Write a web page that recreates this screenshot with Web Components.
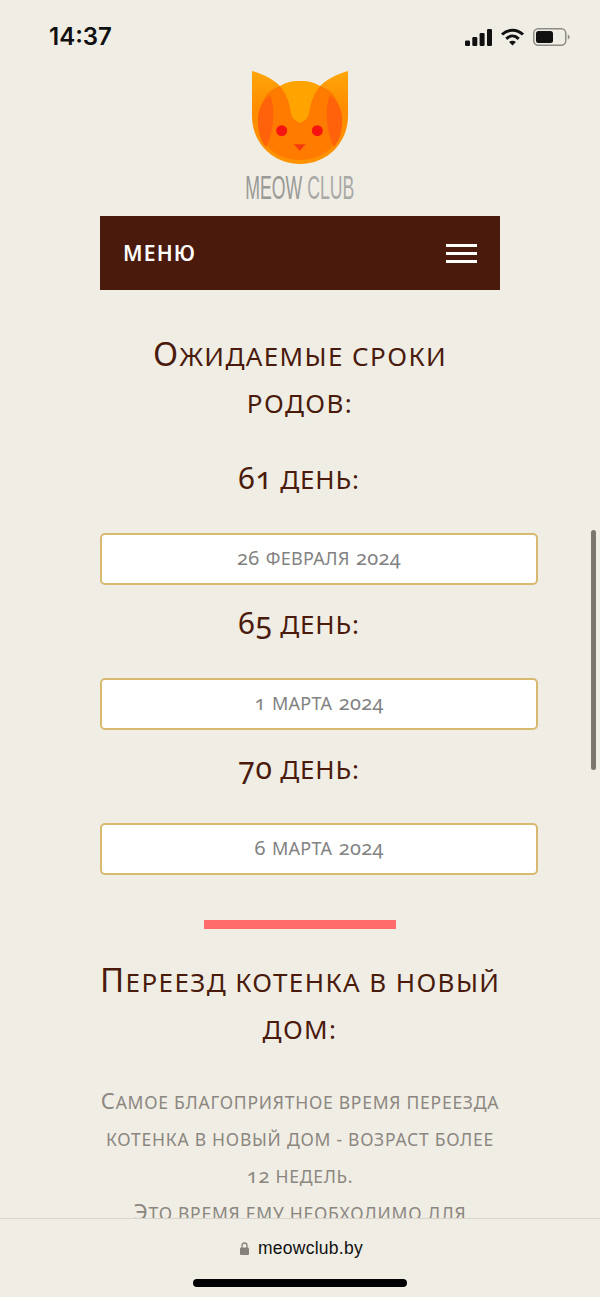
<!DOCTYPE html>
<html lang="ru">
<head>
<meta charset="utf-8">
<title>Meow Club</title>
<style>
    html, body { margin: 0; height: 1297px; overflow: hidden; background: #f0ede5; }
    body { font-family: "Noto Sans", "Open Sans", sans-serif; position: relative; }
</style>
</head>
<body>
<meow-page>
    <status-bar slot="status"></status-bar>
    <site-logo></site-logo>
    <site-menu></site-menu>
    <section-title><b>О</b>жидаемые сроки<br>родов:</section-title>
    <day-title><b>61</b> день:</day-title>
    <date-field><b>26</b> февраля <b>2024</b></date-field>
    <day-title><b>65</b> день:</day-title>
    <date-field><b>1</b> марта <b>2024</b></date-field>
    <day-title><b>70</b> день:</day-title>
    <date-field><b>6</b> марта <b>2024</b></date-field>
    <pink-rule></pink-rule>
    <section-title><b>П</b>ереезд котенка в новый<br>дом:</section-title>
    <body-text><b>С</b>амое благоприятное время переезда<br>котенка в новый дом - возраст более<br><i>12</i> недель.<br><b>Э</b>то время ему необходимо для</body-text>
</meow-page>
<page-scrollbar></page-scrollbar>
<browser-bar>meowclub.by</browser-bar>

<script>
function define(name, html){
    customElements.define(name, class extends HTMLElement {
        constructor(){
            super();
            this.attachShadow({mode:"open"}).innerHTML = html;
        }
    });
}

define("meow-page", `
    <style>
        :host { display: block; }
        #content { width: 400px; margin-left: 100px; }
    </style>
    <slot name="status"></slot>
    <div id="content"><slot></slot></div>
`);

define("status-bar", `
    <style>
        :host { display: flex; justify-content: space-between; align-items: flex-start; height: 71px; padding: 25px 30px 0 49px; box-sizing: border-box; }
        #time { font: 600 24px/24px Inter, sans-serif; color: #111; }
        #icons { display: flex; align-items: center; gap: 8px; margin-top: 3px; }
        svg { display: block; }
    </style>
    <span id="time">14:37</span>
    <div id="icons">
        <svg width="27" height="17" viewBox="0 0 27 17" fill="#111">
            <rect x="0" y="11.5" width="5" height="5.5" rx="1.2"/>
            <rect x="7.3" y="8" width="5" height="9" rx="1.2"/>
            <rect x="14.6" y="4" width="5" height="13" rx="1.2"/>
            <rect x="22" y="0" width="5" height="17" rx="1.2"/>
        </svg>
        <svg width="25" height="18" viewBox="0 0 24 18" fill="none" stroke="#111" stroke-width="3">
            <path d="M1.5 6.5 C7.5 .8 16.5 .8 22.5 6.5"/>
            <path d="M5.8 10.8 C9.5 7.2 14.5 7.2 18.2 10.8"/>
            <path d="M12 17.6 L8.6 14 C10.5 12.4 13.5 12.4 15.4 14 Z" fill="#111" stroke="none"/>
        </svg>
        <svg width="37" height="18" viewBox="0 0 37 18">
            <rect x=".75" y=".75" width="32" height="16.5" rx="4.5" fill="none" stroke="#8d8b86" stroke-width="1.5"/>
            <rect x="3" y="3" width="17" height="12" rx="2.5" fill="#111"/>
            <path d="M34.8 6.5 C36 7 36.6 8 36.6 9 C36.6 10 36 11 34.8 11.5 Z" fill="#8d8b86"/>
        </svg>
    </div>
`);

define("site-logo", `
    <style>
        :host { display: flex; flex-direction: column; align-items: center; height: 145px; }
        svg { display: block; }
        #name { display: flex; justify-content: center; width: 110px; height: 36px; margin-top: 5px; font: 34px/36px "Liberation Sans", sans-serif; color: #999996; white-space: nowrap; }
        #name span { display: inline-block; transform: scaleX(.52); transform-origin: center; }
        #name em { font-style: normal; color: #a9a9a6; }
    </style>
    <svg width="96" height="93" viewBox="0 0 96 93">
        <defs>
            <linearGradient id="ear" x1="0" y1="0" x2="0" y2="1">
                <stop offset="0" stop-color="#ffa60a"/>
                <stop offset=".4" stop-color="#ff8c00"/>
                <stop offset="1" stop-color="#ff9300"/>
            </linearGradient>
        </defs>
        <path d="M0 0 C11 3 21 8 29 16 C34 12 41 10 48 10 C55 10 62 12 67 16 C75 8 85 3 96 0 L96 45 C96 72 75 93 48 93 C21 93 0 72 0 45 Z" fill="url(#ear)"/>
        <path d="M28 15 C34 11 41 10 48 10 C55 10 62 11 68 15 L62 36 L56 50 L48 52 L40 50 L34 36 Z" fill="#ffa300"/>
        <path d="M28 15 C33 21 36 28 38 36 C39 44 40 49 48 52 C56 49 57 44 58 36 C60 28 63 21 68 15 C76 18 82 22 85 30 C89 40 90 50 88 60 C84 78 68 89 48 89 C28 89 12 78 8 60 C6 50 7 40 11 30 C14 22 20 18 28 15 Z" fill="#ff7b00"/>
        <path d="M18 24 C23 36 23 58 14 76 C8 69 5 58 6 46 C7 37 11 29 18 24 Z" fill="#ff620a"/>
        <path d="M78 24 C73 36 73 58 82 76 C88 69 91 58 90 46 C89 37 85 29 78 24 Z" fill="#ff620a"/>
        <circle cx="29.7" cy="59.7" r="5.5" fill="#f5140f"/>
        <circle cx="65.3" cy="59.7" r="5.5" fill="#f5140f"/>
        <path d="M41.7 73.3 H53.7 L47.7 79.7 Z" fill="#f53c0c"/>
    </svg>
    <div id="name"><span>MEOW <em>CLUB</em></span></div>
`);

define("site-menu", `
    <style>
        :host { display: flex; justify-content: space-between; align-items: center; height: 74px; padding: 0 23px; box-sizing: border-box; background: #4a1b0c; color: #fff; }
        span { font: 600 21px/1 "Noto Sans", sans-serif; text-transform: uppercase; letter-spacing: 1.2px; }
        #burger { display: flex; flex-direction: column; gap: 5px; width: 31px; }
        #burger i { display: block; height: 3px; background: #fff; }
    </style>
    <span>меню</span>
    <div id="burger"><i></i><i></i><i></i></div>
`);

define("section-title", `
    <style>
        :host { display: block; text-align: center; white-space: nowrap; margin: 43px 0 -1px; font: 400 26px/47px "Noto Sans", sans-serif; text-transform: uppercase; letter-spacing: 1.4px; font-feature-settings: "onum"; color: #4a1b0c; }
        ::slotted(b) { font-weight: 400; font-size: 33px; line-height: 0; }
    </style>
    <slot></slot>
`);

define("day-title", `
    <style>
        :host { display: block; width: 398px; text-align: center; margin: 30px 0 29.5px; font: 400 26px/47px "Noto Sans", sans-serif; text-transform: uppercase; letter-spacing: .8px; font-feature-settings: "onum"; color: #4a1b0c; }
        ::slotted(b) { font-weight: 400; font-size: 30px; line-height: 0; }
    </style>
    <slot></slot>
`);

define("date-field", `
    <style>
        :host { display: flex; justify-content: center; align-items: center; gap: .35em; width: 438px; height: 52px; margin-bottom: -13.5px; padding-bottom: 2px; box-sizing: border-box; background: #fff; border: 2px solid #d8b970; border-radius: 5px; font: 400 18px/1 "Noto Sans", sans-serif; text-transform: uppercase; letter-spacing: .3px; font-feature-settings: "onum"; color: #828282; }
        ::slotted(b) { font-weight: 400; font-size: 20px; line-height: 0; }
    </style>
    <slot></slot>
`);

define("pink-rule", `
    <style>
        :host { display: block; width: 192px; height: 9px; margin: 58.5px auto -13px; background: #ff6b6b; }
    </style>
`);

define("body-text", `
    <style>
        :host { display: block; text-align: center; white-space: nowrap; margin-top: 32px; font: 400 17.5px/37px "Noto Sans", sans-serif; text-transform: uppercase; letter-spacing: .75px; font-feature-settings: "onum"; color: #8b8780; }
        ::slotted(b) { font-weight: 400; font-size: 22px; line-height: 0; }
        ::slotted(i) { font-style: normal; font-size: 20px; line-height: 0; }
    </style>
    <slot></slot>
`);

define("page-scrollbar", `
    <style>
        :host { position: absolute; left: 591px; top: 530px; width: 5px; height: 240px; border-radius: 3px; background: #7c766c; }
    </style>
`);

define("browser-bar", `
    <style>
        :host { position: absolute; left: 0; right: 0; bottom: 0; height: 79px; box-sizing: border-box; border-top: 1.5px solid #d8d5cc; background: #f0ede5; display: flex; flex-direction: column; align-items: center; }
        #address { display: flex; align-items: center; gap: 9px; margin: 18px 0 0 3px; height: 22px; font: 400 17.5px/22px "Liberation Sans", sans-serif; color: #111; letter-spacing: .25px; }
        #home { width: 214px; height: 8px; margin-top: 20px; border-radius: 4px; background: #000; }
        svg { display: block; }
    </style>
    <div id="address">
        <svg width="9" height="13" viewBox="0 0 9 13">
            <path d="M2 6 V3.8 C2 2.2 3 1 4.5 1 C6 1 7 2.2 7 3.8 V6" fill="none" stroke="#85827c" stroke-width="1.3"/>
            <rect x="0" y="5.5" width="9" height="7.5" rx="1.2" fill="#85827c"/>
        </svg>
        <slot></slot>
    </div>
    <div id="home"></div>
`);
</script>
</body>
</html>
